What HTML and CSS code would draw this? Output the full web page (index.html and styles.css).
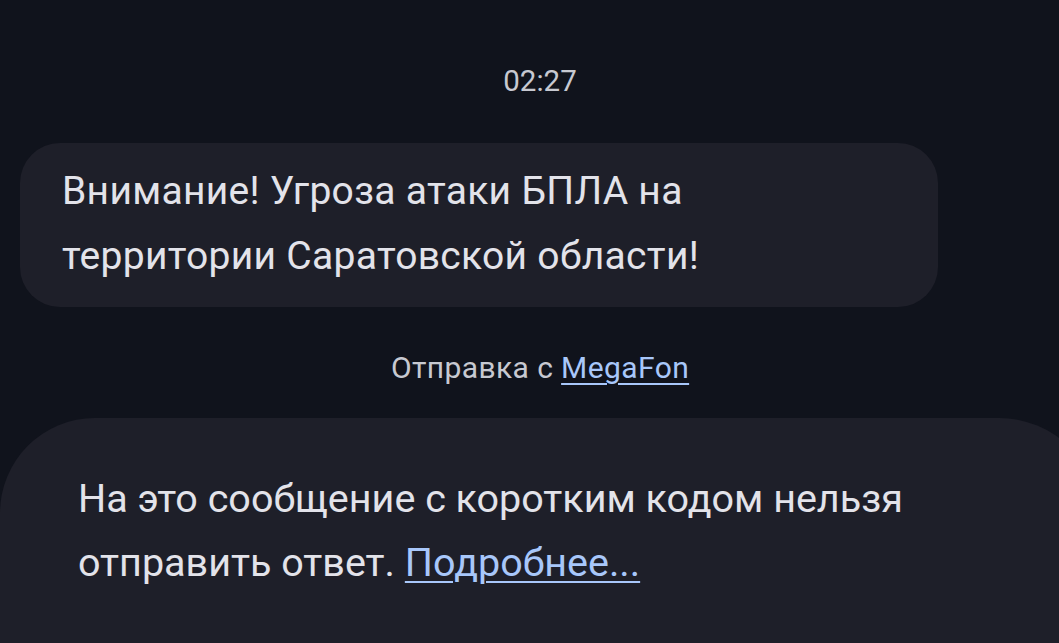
FILE: index.html
```html
<!DOCTYPE html>
<html lang="ru">
<head>
<meta charset="utf-8">
<link rel="stylesheet" href="styles.css">
</head>
<body>
<main class="thread">
  <div class="time">02:27</div>
  <div class="bubble"><p class="bubble-text">Внимание! Угроза атаки БПЛА на территории Саратовской области!</p></div>
  <div class="sender">Отправка с <a class="link" href="#">MegaFon</a></div>
  <section class="notice">
    <p class="notice-text">На это сообщение с коротким кодом нельзя отправить ответ. <a class="link" href="#">Подробнее...</a></p>
  </section>
</main>
</body>
</html>
```
FILE: styles.css
```css
html, body {
  margin: 0;
  padding: 0;
  background: #10131c;
  height: 100%;
  overflow: hidden;
}
body {
  font-family: Roboto, "Noto Sans", sans-serif;
  color: #e3e3ea;
}
.thread {
  display: flex;
  flex-direction: column;
  align-items: stretch;
}
.time {
  padding: 63px 0 0 21px;
  text-align: center;
  font-size: 29.5px;
  line-height: 36px;
  color: #c7c9d1;
}
.bubble {
  margin: 44px 0 0 20px;
  width: 918px;
  box-sizing: border-box;
  background: #1e1f29;
  border-radius: 40px;
  padding: 16px 42px 18px 42px;
}
.bubble-text {
  margin: 0;
  max-width: 660px;
  font-size: 39px;
  letter-spacing: 0.3px;
  line-height: 65px;
  color: #e3e3ea;
}
.sender {
  margin-top: 43px;
  padding-left: 21px;
  text-align: center;
  font-size: 30px;
  letter-spacing: 0.4px;
  line-height: 36px;
  color: #c7c9d1;
}
.link {
  color: #a8c7fa;
  text-decoration: underline;
  text-underline-offset: 5px;
  text-decoration-thickness: 2px;
}
.notice {
  margin: 32px -40px 0 0;
  background: #1e1f29;
  border-radius: 95px 100px 0 0;
  padding: 49px 40px 0 78px;
  box-sizing: border-box;
  height: 225px;
}
.notice-text {
  margin: 0;
  font-size: 39.5px;
  line-height: 64px;
  color: #e3e3ea;
  max-width: 880px;
}
```
